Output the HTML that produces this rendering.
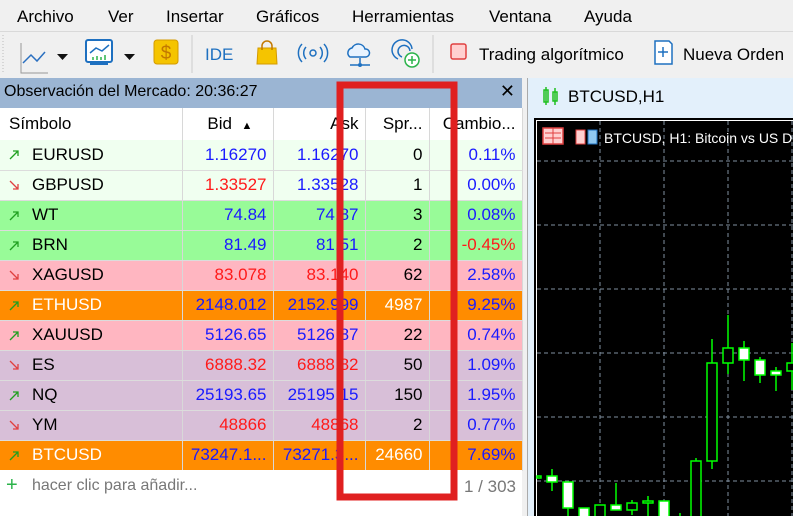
<!DOCTYPE html>
<html><head><meta charset="utf-8">
<style>
*{margin:0;padding:0;box-sizing:border-box}
body{width:793px;height:516px;overflow:hidden;background:#f0f0f0;font-family:"Liberation Sans","DejaVu Sans",sans-serif;position:relative;color:#000}
.abs{position:absolute}
.menu span{position:absolute;top:7px;font-size:17px}
.tb{font-size:17px}
table{border-collapse:collapse;position:absolute;left:0;top:108px;width:522px;font-size:17px;table-layout:fixed}
td{height:30px;border-right:1px solid #d8d8d8;border-bottom:1px solid #dcdcdc;text-align:right;padding-right:6px;white-space:nowrap;overflow:hidden}
td:first-child{text-align:left;padding-left:32px;position:relative}
th{height:32px;font-weight:normal;text-align:right;padding-right:6px;border-right:1px solid #d8d8d8;background:#fff;white-space:nowrap;overflow:hidden}
th:first-child{text-align:left;padding-left:9px}
.b{color:#1a1aff}.r{color:#ff1a1a}.w{color:#fff}
.up,.dn{position:absolute;left:9px;top:9px;width:11px;height:11px}
</style></head><body>
<div class="menu" style="position:absolute;left:0;top:0;width:793px;height:32px;background:#f0f0f0;border-bottom:1px solid #d9d9d9">
<span style="left:17px">Archivo</span><span style="left:108px">Ver</span><span style="left:166px">Insertar</span><span style="left:256px">Gráficos</span><span style="left:352px">Herramientas</span><span style="left:489px">Ventana</span><span style="left:584px">Ayuda</span>
</div>
<svg class="abs" style="left:0;top:33px" width="793" height="44">
<g stroke="#bbb" stroke-dasharray="1 2"><line x1="3" y1="2" x2="3" y2="40"/></g>
<path d="M21 10 V40 H48" stroke="#999" fill="none"/>
<path d="M23 30 L31 22 L37 28 L45 19" stroke="#2a6fc0" stroke-width="1.5" fill="none"/>
<path d="M57 21 h11 l-5.5 6z" fill="#111"/>
<rect x="86" y="7" width="26" height="22" rx="2" fill="#fff" stroke="#1e70c0" stroke-width="2"/>
<path d="M90 20 L96 15 L102 18 L109 12" stroke="#1e70c0" stroke-width="1.5" fill="none"/>
<path d="M93 27v-3M97 27v-4M101 27v-3M105 27v-5" stroke="#2bb34a" stroke-width="1.5"/>
<path d="M90 31h18" stroke="#1e70c0" stroke-width="2"/>
<path d="M124 21 h11 l-5.5 6z" fill="#111"/>
<rect x="154" y="7" width="24" height="24" rx="3" fill="#f5c400" stroke="#d49a00"/>
<text x="166" y="26" font-size="19" text-anchor="middle" fill="#c27800" font-family="Liberation Sans">$</text>
<line x1="192" y1="2" x2="192" y2="40" stroke="#ccc"/>
<text x="205" y="27" font-size="17" fill="#1e70c0" font-family="Liberation Sans">IDE</text>
<path d="M258 15 h18 l1 16 h-20z" fill="#f5c400" stroke="#d49a00"/>
<path d="M262 17 v-4 a5 5 0 0 1 10 0 v4" stroke="#c27800" fill="none" stroke-width="1.5"/>
<circle cx="313" cy="20" r="3" fill="none" stroke="#1e70c0" stroke-width="1.5"/>
<path d="M306 14 a9 9 0 0 0 0 12M320 14 a9 9 0 0 1 0 12M302 11 a13 13 0 0 0 0 18M324 11 a13 13 0 0 1 0 18" stroke="#1e70c0" stroke-width="1.5" fill="none"/>
<path d="M350 24 a5 5 0 0 1 2 -9 a7 7 0 0 1 13 1 a4 4 0 0 1 1 8z" fill="#e8f3ff" stroke="#1e70c0" stroke-width="1.5"/>
<path d="M360 25v5M350 32h20" stroke="#1e70c0" stroke-width="1.5"/><circle cx="360" cy="32" r="2" fill="#1e70c0"/>
<path d="M398 26 a10 10 0 1 1 14 -10M402 24 a6 6 0 1 1 8 -6" stroke="#1e70c0" stroke-width="1.5" fill="none"/>
<circle cx="412" cy="27" r="7" fill="#fff" stroke="#2bb34a" stroke-width="1.5"/><path d="M412 23v8M408 27h8" stroke="#2bb34a" stroke-width="1.5"/>
<line x1="433" y1="2" x2="433" y2="40" stroke="#ccc"/>
<rect x="451" y="11" width="15" height="15" rx="2" fill="#ffd0d0" stroke="#e04040" stroke-width="1.5"/>
<path d="M655 8 h14 l3 3 v20 h-17z" fill="#fff" stroke="#1e70c0" stroke-width="1.5"/><path d="M663 14v10M658 19h10" stroke="#1e70c0" stroke-width="1.5"/>
</svg>
<div class="abs tb" style="left:479px;top:45px">Trading algorítmico</div>
<div class="abs tb" style="left:683px;top:45px">Nueva Orden</div>
<div class="abs" style="left:0;top:78px;width:522px;height:30px;background:#9bb5d3;font-size:16px;padding:5px 0 0 4px">Observación del Mercado: 20:36:27<span style="position:absolute;right:7px;top:3px;font-size:18px;font-weight:bold">✕</span></div>
<table>
<colgroup><col style="width:182px"><col style="width:91px"><col style="width:92px"><col style="width:64px"><col style="width:93px"></colgroup>
<tr><th>Símbolo</th><th>Bid &nbsp;<span style="font-size:11px">▲</span>&nbsp;&nbsp;&nbsp;</th><th>Ask</th><th>Spr...</th><th>Cambio...</th></tr>
<tr style="background:#f0fff0"><td><svg class="up"><path d="M1 10L9 2M4 2h5v5" stroke="#20a020" stroke-width="1.3" fill="none"/></svg>EURUSD</td><td class="b">1.16270</td><td class="b">1.16270</td><td>0</td><td class="b">0.11%</td></tr>
<tr style="background:#f0fff0"><td><svg class="dn"><path d="M1 1L9 9M4 9h5v-5" stroke="#e04040" stroke-width="1.3" fill="none"/></svg>GBPUSD</td><td class="r">1.33527</td><td class="b">1.33528</td><td>1</td><td class="b">0.00%</td></tr>
<tr style="background:#98fb98"><td><svg class="up"><path d="M1 10L9 2M4 2h5v5" stroke="#20a020" stroke-width="1.3" fill="none"/></svg>WT</td><td class="b">74.84</td><td class="b">74.87</td><td>3</td><td class="b">0.08%</td></tr>
<tr style="background:#98fb98"><td><svg class="up"><path d="M1 10L9 2M4 2h5v5" stroke="#20a020" stroke-width="1.3" fill="none"/></svg>BRN</td><td class="b">81.49</td><td class="b">81.51</td><td>2</td><td class="r">-0.45%</td></tr>
<tr style="background:#ffb6c1"><td><svg class="dn"><path d="M1 1L9 9M4 9h5v-5" stroke="#e04040" stroke-width="1.3" fill="none"/></svg>XAGUSD</td><td class="r">83.078</td><td class="r">83.140</td><td>62</td><td class="b">2.58%</td></tr>
<tr style="background:#ff8c00"><td class="w"><svg class="up"><path d="M1 10L9 2M4 2h5v5" stroke="#20a020" stroke-width="1.3" fill="none"/></svg>ETHUSD</td><td class="b">2148.012</td><td class="b">2152.999</td><td class="w">4987</td><td class="b">9.25%</td></tr>
<tr style="background:#ffb6c1"><td><svg class="up"><path d="M1 10L9 2M4 2h5v5" stroke="#20a020" stroke-width="1.3" fill="none"/></svg>XAUUSD</td><td class="b">5126.65</td><td class="b">5126.87</td><td>22</td><td class="b">0.74%</td></tr>
<tr style="background:#d8bfd8"><td><svg class="dn"><path d="M1 1L9 9M4 9h5v-5" stroke="#e04040" stroke-width="1.3" fill="none"/></svg>ES</td><td class="r">6888.32</td><td class="r">6888.82</td><td>50</td><td class="b">1.09%</td></tr>
<tr style="background:#d8bfd8"><td><svg class="up"><path d="M1 10L9 2M4 2h5v5" stroke="#20a020" stroke-width="1.3" fill="none"/></svg>NQ</td><td class="b">25193.65</td><td class="b">25195.15</td><td>150</td><td class="b">1.95%</td></tr>
<tr style="background:#d8bfd8"><td><svg class="dn"><path d="M1 1L9 9M4 9h5v-5" stroke="#e04040" stroke-width="1.3" fill="none"/></svg>YM</td><td class="r">48866</td><td class="r">48868</td><td>2</td><td class="b">0.77%</td></tr>
<tr style="background:#ff8c00"><td class="w"><svg class="up"><path d="M1 10L9 2M4 2h5v5" stroke="#20a020" stroke-width="1.3" fill="none"/></svg>BTCUSD</td><td class="b">73247.1...</td><td class="b">73271.3...</td><td class="w">24660</td><td class="b">7.69%</td></tr>
</table>
<div class="abs" style="left:0;top:470px;width:522px;height:46px;background:#fff;font-size:16px;color:#777">
<span style="position:absolute;left:6px;top:4px;color:#2bb34a;font-size:20px">+</span>
<span style="position:absolute;left:32px;top:7px">hacer clic para añadir...</span>
<span style="position:absolute;right:6px;top:7px;font-size:17px">1 / 303</span></div>
<div class="abs" style="left:527px;top:78px;width:266px;height:438px;background:#e3f0fb;border-left:1px solid #aaa"></div>
<div class="abs" style="left:568px;top:87px;font-size:17px">BTCUSD,H1</div>
<svg class="abs" style="left:0;top:0" width="793" height="516">
<g stroke="#20c020" stroke-width="1.5" fill="none"><rect x="544" y="90" width="4" height="12"/><line x1="546" y1="87" x2="546" y2="105"/><rect x="553" y="92" width="4" height="9"/><line x1="555" y1="88" x2="555" y2="105"/></g>
<rect x="534" y="118" width="259" height="398" fill="#000"/>
<rect x="536.5" y="120.5" width="260" height="400" fill="none" stroke="#fff"/>
<g stroke="#8090a0" stroke-dasharray="4 3"><line x1="600" y1="121" x2="600" y2="516"/><line x1="664" y1="121" x2="664" y2="516"/><line x1="728" y1="121" x2="728" y2="516"/><line x1="792" y1="121" x2="792" y2="516"/>
<line x1="537" y1="161" x2="793" y2="161"/><line x1="537" y1="225" x2="793" y2="225"/><line x1="537" y1="289" x2="793" y2="289"/><line x1="537" y1="353" x2="793" y2="353"/><line x1="537" y1="417" x2="793" y2="417"/><line x1="537" y1="481" x2="793" y2="481"/></g>
<rect x="543" y="128" width="20" height="16" fill="#ffd0d0" stroke="#e04040" stroke-width="1.5"/><path d="M553 128v16M545 133h16M545 138h16" stroke="#e04040"/>
<rect x="576" y="130" width="9" height="14" fill="#ffd0d0" stroke="#e04040"/><rect x="588" y="130" width="9" height="14" fill="#8fc8f0" stroke="#1e70c0"/>
<text x="604" y="143" fill="#fff" font-size="14" font-family="Liberation Sans">BTCUSD, H1:  Bitcoin vs US Dollar</text>
<g stroke="#00ff00" stroke-width="1.5">
<line x1="552" y1="469" x2="552" y2="491"/><line x1="568" y1="482" x2="568" y2="516"/><line x1="616" y1="483" x2="616" y2="510"/><line x1="632" y1="500" x2="632" y2="515"/><line x1="648" y1="496" x2="648" y2="516"/><line x1="680" y1="513" x2="680" y2="516"/><line x1="696" y1="458" x2="696" y2="461"/><line x1="712" y1="339" x2="712" y2="469"/><line x1="728" y1="315" x2="728" y2="374"/><line x1="744" y1="341" x2="744" y2="381"/><line x1="760" y1="357" x2="760" y2="383"/><line x1="776" y1="367" x2="776" y2="391"/><line x1="792" y1="343" x2="792" y2="390"/>
<rect x="537" y="476" width="4" height="2" fill="#000"/>
<rect x="547" y="476" width="10" height="6" fill="#fff"/><rect x="563" y="482" width="10" height="26" fill="#fff"/><rect x="579" y="508" width="10" height="10" fill="#fff"/><rect x="595" y="505" width="10" height="12" fill="#000"/><rect x="611" y="505" width="10" height="5" fill="#fff"/><rect x="627" y="503" width="10" height="7" fill="#000"/><rect x="643" y="501" width="10" height="2" fill="#000"/><rect x="659" y="501" width="10" height="16" fill="#fff"/><rect x="691" y="461" width="10" height="56" fill="#000"/><rect x="707" y="363" width="10" height="98" fill="#000"/><rect x="723" y="348" width="10" height="15" fill="#000"/><rect x="739" y="348" width="10" height="12" fill="#fff"/><rect x="755" y="360" width="10" height="15" fill="#fff"/><rect x="771" y="371" width="10" height="4" fill="#fff"/><rect x="787" y="363" width="10" height="8" fill="#000"/>
</g>
<rect x="340" y="85" width="114" height="412" fill="none" stroke="#e02020" stroke-width="7"/>
</svg>
</body></html>
